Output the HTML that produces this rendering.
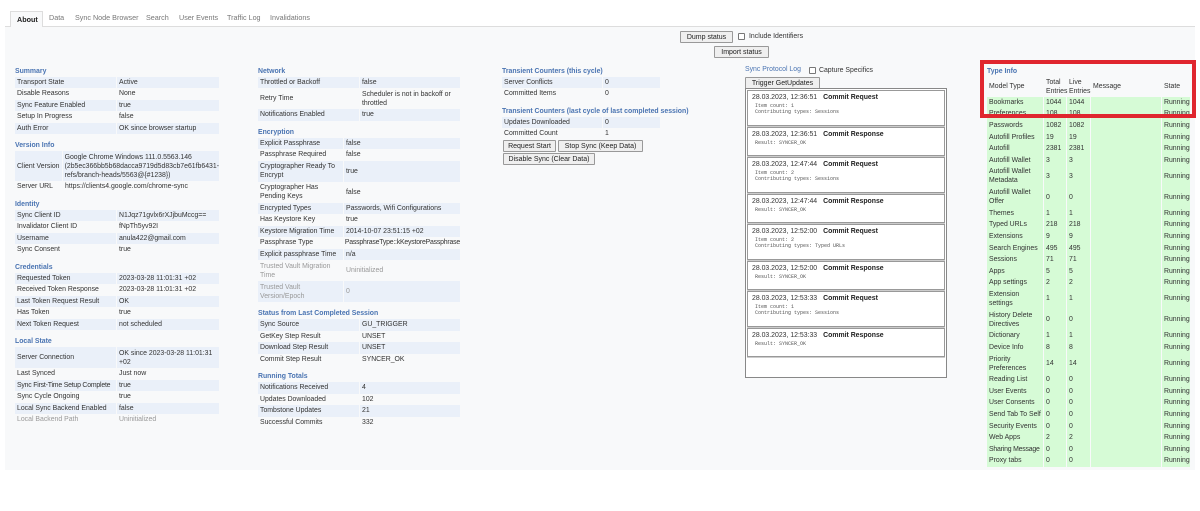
<!DOCTYPE html>
<html><head><meta charset="utf-8"><style>
*{box-sizing:border-box;margin:0;padding:0}
body{width:1200px;height:511px;background:#fff;font-family:"Liberation Sans",sans-serif;font-size:6.9px;color:#333;position:relative;overflow:hidden}
.bg{position:absolute;left:5px;top:27px;width:1190px;height:443px;background:#f8f9fa}
.tabs{position:absolute;left:5px;top:10px;width:1190px;height:17px;border-bottom:1px solid #ddd}
.tab{position:absolute;top:3px;color:#777;font-size:7.2px}
.tab.on{top:1px;left:5px;width:33px;height:16px;border:1px solid #ddd;border-bottom:none;background:#f8f9fa;color:#222;font-weight:bold;padding:3px 0 0 6px}
.sec{position:absolute}
.h{color:#4a74b2;font-weight:bold;height:11px;line-height:11px;margin-top:6px;white-space:nowrap}
.h:first-child{margin-top:0}
.r{display:flex;height:11.5px;align-items:center;white-space:nowrap}
.r>div{padding-left:2px;margin-right:1px;height:100%;display:flex;align-items:center;line-height:9px;overflow:visible}
.r>div:last-child{margin-right:0}
.a>div{background:#eaf0f9}
.r2{height:21px}
.r3{height:30px}
.g>div{color:#999}
button{font-family:"Liberation Sans",sans-serif;font-size:7px;color:#222;background:#efefef;border:1px solid #999;border-radius:1px;height:12px;padding:0 3px;position:absolute;white-space:nowrap}
.cb{position:absolute;width:7px;height:7px;border:1px solid #777;border-radius:1px;background:#fff}
.log{position:absolute;left:745px;top:88px;width:202px;height:290px;border:1px solid #888;background:#fff}
.e{border:1px solid #999;margin:1px 1px 0 1px;padding:3px 4px 0 4px;box-shadow:0 1px 0 #ccc}
.e b{margin-left:6px;color:#222}
.m{font-family:"Liberation Mono",monospace;font-size:5px;color:#555;margin-left:3px;margin-top:2px;line-height:6px}
.ti .r{height:11.6px}.ti .r>div{background:#d6fbd6}
.ti .r2{height:20.7px}
.ti .hdr>div{background:none}
.red{position:absolute;left:980px;top:60px;width:216px;height:58px;border:4px solid #e0262f}
</style></head><body>
<div class="bg"></div>
<div class="tabs">
<div class="tab on">About</div>
<div class="tab" style="left:44px">Data</div>
<div class="tab" style="left:70px">Sync Node Browser</div>
<div class="tab" style="left:141px">Search</div>
<div class="tab" style="left:174px">User Events</div>
<div class="tab" style="left:222px">Traffic Log</div>
<div class="tab" style="left:265px">Invalidations</div>
</div>

<button style="left:680px;top:31px;width:53px">Dump status</button>
<div class="cb" style="left:738px;top:33px"></div>
<div class="sec" style="left:749px;top:33px">Include Identifiers</div>
<button style="left:714px;top:46px;width:55px">Import status</button>

<!-- col1 -->
<div class="sec" style="left:15px;top:65.5px;width:204px">
<div class="h">Summary</div>
<div class="r a"><div style="width:101px">Transport State</div><div style="flex:1">Active</div></div>
<div class="r"><div style="width:101px">Disable Reasons</div><div style="flex:1">None</div></div>
<div class="r a"><div style="width:101px">Sync Feature Enabled</div><div style="flex:1">true</div></div>
<div class="r"><div style="width:101px">Setup In Progress</div><div style="flex:1">false</div></div>
<div class="r a"><div style="width:101px">Auth Error</div><div style="flex:1">OK since browser startup</div></div>
<div class="h">Version Info</div>
<div class="r r3 a"><div style="width:47px">Client Version</div><div style="flex:1">Google Chrome Windows 111.0.5563.146<br>(2b5ec366bb5b68dacca9719d5d83cb7e61fb6431-<br>refs/branch-heads/5563@{#1238})</div></div>
<div class="r"><div style="width:47px">Server URL</div><div style="flex:1">https://clients4.google.com/chrome-sync</div></div>
<div class="h">Identity</div>
<div class="r a"><div style="width:101px">Sync Client ID</div><div style="flex:1">N1Jqz71gvlx6rXJjbuMccg==</div></div>
<div class="r"><div style="width:101px">Invalidator Client ID</div><div style="flex:1">fNpTh5yv92I</div></div>
<div class="r a"><div style="width:101px">Username</div><div style="flex:1">anula422@gmail.com</div></div>
<div class="r"><div style="width:101px">Sync Consent</div><div style="flex:1">true</div></div>
<div class="h">Credentials</div>
<div class="r a"><div style="width:101px">Requested Token</div><div style="flex:1">2023-03-28 11:01:31 +02</div></div>
<div class="r"><div style="width:101px">Received Token Response</div><div style="flex:1">2023-03-28 11:01:31 +02</div></div>
<div class="r a"><div style="width:101px">Last Token Request Result</div><div style="flex:1">OK</div></div>
<div class="r"><div style="width:101px">Has Token</div><div style="flex:1">true</div></div>
<div class="r a"><div style="width:101px">Next Token Request</div><div style="flex:1">not scheduled</div></div>
<div class="h">Local State</div>
<div class="r r2 a"><div style="width:101px">Server Connection</div><div style="flex:1">OK since 2023-03-28 11:01:31<br>+02</div></div>
<div class="r"><div style="width:101px">Last Synced</div><div style="flex:1">Just now</div></div>
<div class="r a"><div style="width:101px;letter-spacing:-0.2px">Sync First-Time Setup Complete</div><div style="flex:1">true</div></div>
<div class="r"><div style="width:101px">Sync Cycle Ongoing</div><div style="flex:1">true</div></div>
<div class="r a"><div style="width:101px">Local Sync Backend Enabled</div><div style="flex:1">false</div></div>
<div class="r g"><div style="width:101px">Local Backend Path</div><div style="flex:1">Uninitialized</div></div>
</div>

<!-- col2 -->
<div class="sec" style="left:258px;top:65.5px;width:202px">
<div class="h">Network</div>
<div class="r a"><div style="width:101px">Throttled or Backoff</div><div style="flex:1">false</div></div>
<div class="r r2"><div style="width:101px">Retry Time</div><div style="flex:1">Scheduler is not in backoff or<br>throttled</div></div>
<div class="r a"><div style="width:101px">Notifications Enabled</div><div style="flex:1">true</div></div>
<div class="h">Encryption</div>
<div class="r a"><div style="width:85px">Explicit Passphrase</div><div style="flex:1">false</div></div>
<div class="r"><div style="width:85px">Passphrase Required</div><div style="flex:1">false</div></div>
<div class="r r2 a"><div style="width:85px">Cryptographer Ready To<br>Encrypt</div><div style="flex:1">true</div></div>
<div class="r r2"><div style="width:85px">Cryptographer Has<br>Pending Keys</div><div style="flex:1">false</div></div>
<div class="r a"><div style="width:85px">Encrypted Types</div><div style="flex:1">Passwords, Wifi Configurations</div></div>
<div class="r"><div style="width:85px">Has Keystore Key</div><div style="flex:1">true</div></div>
<div class="r a"><div style="width:85px">Keystore Migration Time</div><div style="flex:1">2014-10-07 23:51:15 +02</div></div>
<div class="r"><div style="width:85px">Passphrase Type</div><div style="flex:1;letter-spacing:-0.2px">PassphraseType::kKeystorePassphrase</div></div>
<div class="r a"><div style="width:85px">Explicit passphrase Time</div><div style="flex:1">n/a</div></div>
<div class="r r2 g"><div style="width:85px">Trusted Vault Migration<br>Time</div><div style="flex:1">Uninitialized</div></div>
<div class="r r2 g a"><div style="width:85px;color:#999">Trusted Vault<br>Version/Epoch</div><div style="flex:1;color:#999">0</div></div>
<div class="h">Status from Last Completed Session</div>
<div class="r a"><div style="width:101px">Sync Source</div><div style="flex:1">GU_TRIGGER</div></div>
<div class="r"><div style="width:101px">GetKey Step Result</div><div style="flex:1">UNSET</div></div>
<div class="r a"><div style="width:101px">Download Step Result</div><div style="flex:1">UNSET</div></div>
<div class="r"><div style="width:101px">Commit Step Result</div><div style="flex:1">SYNCER_OK</div></div>
<div class="h">Running Totals</div>
<div class="r a"><div style="width:101px">Notifications Received</div><div style="flex:1">4</div></div>
<div class="r"><div style="width:101px">Updates Downloaded</div><div style="flex:1">102</div></div>
<div class="r a"><div style="width:101px">Tombstone Updates</div><div style="flex:1">21</div></div>
<div class="r"><div style="width:101px">Successful Commits</div><div style="flex:1">332</div></div>
</div>

<!-- col3 -->
<div class="sec" style="left:502px;top:65.5px;width:158px">
<div class="h">Transient Counters (this cycle)</div>
<div class="r a"><div style="width:100px">Server Conflicts</div><div style="flex:1">0</div></div>
<div class="r"><div style="width:100px">Committed Items</div><div style="flex:1">0</div></div>
<div class="h">Transient Counters (last cycle of last completed session)</div>
<div class="r a"><div style="width:100px">Updates Downloaded</div><div style="flex:1">0</div></div>
<div class="r"><div style="width:100px">Committed Count</div><div style="flex:1">1</div></div>
</div>
<button style="left:503px;top:140px;width:53px">Request Start</button>
<button style="left:558px;top:140px;width:85px">Stop Sync (Keep Data)</button>
<button style="left:503px;top:153px;width:92px">Disable Sync (Clear Data)</button>

<!-- col4 -->
<div class="sec" style="left:745px;top:66px;color:#4a74b2">Sync Protocol Log</div>
<div class="cb" style="left:809px;top:67px"></div>
<div class="sec" style="left:819px;top:67px">Capture Specifics</div>
<button style="left:745px;top:77px;width:75px">Trigger GetUpdates</button>
<div class="log">
<div class="e" style="height:36px">28.03.2023, 12:36:51<b>Commit Request</b><div class="m">Item count: 1<br>Contributing types: Sessions</div></div>
<div class="e" style="height:29px">28.03.2023, 12:36:51<b>Commit Response</b><div class="m">Result: SYNCER_OK</div></div>
<div class="e" style="height:36px">28.03.2023, 12:47:44<b>Commit Request</b><div class="m">Item count: 2<br>Contributing types: Sessions</div></div>
<div class="e" style="height:29px">28.03.2023, 12:47:44<b>Commit Response</b><div class="m">Result: SYNCER_OK</div></div>
<div class="e" style="height:36px">28.03.2023, 12:52:00<b>Commit Request</b><div class="m">Item count: 2<br>Contributing types: Typed URLs</div></div>
<div class="e" style="height:29px">28.03.2023, 12:52:00<b>Commit Response</b><div class="m">Result: SYNCER_OK</div></div>
<div class="e" style="height:36px">28.03.2023, 12:53:33<b>Commit Request</b><div class="m">Item count: 1<br>Contributing types: Sessions</div></div>
<div class="e" style="height:29px">28.03.2023, 12:53:33<b>Commit Response</b><div class="m">Result: SYNCER_OK</div></div>
</div>

<!-- col5 -->
<div class="sec ti" style="left:987px;top:65.5px;width:203px">
<div class="h">Type Info</div>
<div class="r r2 hdr" style="height:20px"><div style="width:56px">Model Type</div><div style="width:22px">Total<br>Entries</div><div style="width:23px">Live<br>Entries</div><div style="width:70px">Message</div><div style="flex:1">State</div></div>
<div class="r"><div style="width:56px">Bookmarks</div><div style="width:22px">1044</div><div style="width:23px">1044</div><div style="width:70px"></div><div style="flex:1">Running</div></div>
<div class="r"><div style="width:56px">Preferences</div><div style="width:22px">108</div><div style="width:23px">108</div><div style="width:70px"></div><div style="flex:1">Running</div></div>
<div class="r"><div style="width:56px">Passwords</div><div style="width:22px">1082</div><div style="width:23px">1082</div><div style="width:70px"></div><div style="flex:1">Running</div></div>
<div class="r"><div style="width:56px">Autofill Profiles</div><div style="width:22px">19</div><div style="width:23px">19</div><div style="width:70px"></div><div style="flex:1">Running</div></div>
<div class="r"><div style="width:56px">Autofill</div><div style="width:22px">2381</div><div style="width:23px">2381</div><div style="width:70px"></div><div style="flex:1">Running</div></div>
<div class="r"><div style="width:56px">Autofill Wallet</div><div style="width:22px">3</div><div style="width:23px">3</div><div style="width:70px"></div><div style="flex:1">Running</div></div>
<div class="r r2"><div style="width:56px">Autofill Wallet<br>Metadata</div><div style="width:22px">3</div><div style="width:23px">3</div><div style="width:70px"></div><div style="flex:1">Running</div></div>
<div class="r r2"><div style="width:56px">Autofill Wallet<br>Offer</div><div style="width:22px">0</div><div style="width:23px">0</div><div style="width:70px"></div><div style="flex:1">Running</div></div>
<div class="r"><div style="width:56px">Themes</div><div style="width:22px">1</div><div style="width:23px">1</div><div style="width:70px"></div><div style="flex:1">Running</div></div>
<div class="r"><div style="width:56px">Typed URLs</div><div style="width:22px">218</div><div style="width:23px">218</div><div style="width:70px"></div><div style="flex:1">Running</div></div>
<div class="r"><div style="width:56px">Extensions</div><div style="width:22px">9</div><div style="width:23px">9</div><div style="width:70px"></div><div style="flex:1">Running</div></div>
<div class="r"><div style="width:56px">Search Engines</div><div style="width:22px">495</div><div style="width:23px">495</div><div style="width:70px"></div><div style="flex:1">Running</div></div>
<div class="r"><div style="width:56px">Sessions</div><div style="width:22px">71</div><div style="width:23px">71</div><div style="width:70px"></div><div style="flex:1">Running</div></div>
<div class="r"><div style="width:56px">Apps</div><div style="width:22px">5</div><div style="width:23px">5</div><div style="width:70px"></div><div style="flex:1">Running</div></div>
<div class="r"><div style="width:56px">App settings</div><div style="width:22px">2</div><div style="width:23px">2</div><div style="width:70px"></div><div style="flex:1">Running</div></div>
<div class="r r2"><div style="width:56px">Extension<br>settings</div><div style="width:22px">1</div><div style="width:23px">1</div><div style="width:70px"></div><div style="flex:1">Running</div></div>
<div class="r r2"><div style="width:56px">History Delete<br>Directives</div><div style="width:22px">0</div><div style="width:23px">0</div><div style="width:70px"></div><div style="flex:1">Running</div></div>
<div class="r"><div style="width:56px">Dictionary</div><div style="width:22px">1</div><div style="width:23px">1</div><div style="width:70px"></div><div style="flex:1">Running</div></div>
<div class="r"><div style="width:56px">Device Info</div><div style="width:22px">8</div><div style="width:23px">8</div><div style="width:70px"></div><div style="flex:1">Running</div></div>
<div class="r r2"><div style="width:56px">Priority<br>Preferences</div><div style="width:22px">14</div><div style="width:23px">14</div><div style="width:70px"></div><div style="flex:1">Running</div></div>
<div class="r"><div style="width:56px">Reading List</div><div style="width:22px">0</div><div style="width:23px">0</div><div style="width:70px"></div><div style="flex:1">Running</div></div>
<div class="r"><div style="width:56px">User Events</div><div style="width:22px">0</div><div style="width:23px">0</div><div style="width:70px"></div><div style="flex:1">Running</div></div>
<div class="r"><div style="width:56px">User Consents</div><div style="width:22px">0</div><div style="width:23px">0</div><div style="width:70px"></div><div style="flex:1">Running</div></div>
<div class="r"><div style="width:56px">Send Tab To Self</div><div style="width:22px">0</div><div style="width:23px">0</div><div style="width:70px"></div><div style="flex:1">Running</div></div>
<div class="r"><div style="width:56px">Security Events</div><div style="width:22px">0</div><div style="width:23px">0</div><div style="width:70px"></div><div style="flex:1">Running</div></div>
<div class="r"><div style="width:56px">Web Apps</div><div style="width:22px">2</div><div style="width:23px">2</div><div style="width:70px"></div><div style="flex:1">Running</div></div>
<div class="r"><div style="width:56px;letter-spacing:-0.2px">Sharing Message</div><div style="width:22px">0</div><div style="width:23px">0</div><div style="width:70px"></div><div style="flex:1">Running</div></div>
<div class="r"><div style="width:56px">Proxy tabs</div><div style="width:22px">0</div><div style="width:23px">0</div><div style="width:70px"></div><div style="flex:1">Running</div></div>
</div>
<div class="red"></div>
</body></html>
